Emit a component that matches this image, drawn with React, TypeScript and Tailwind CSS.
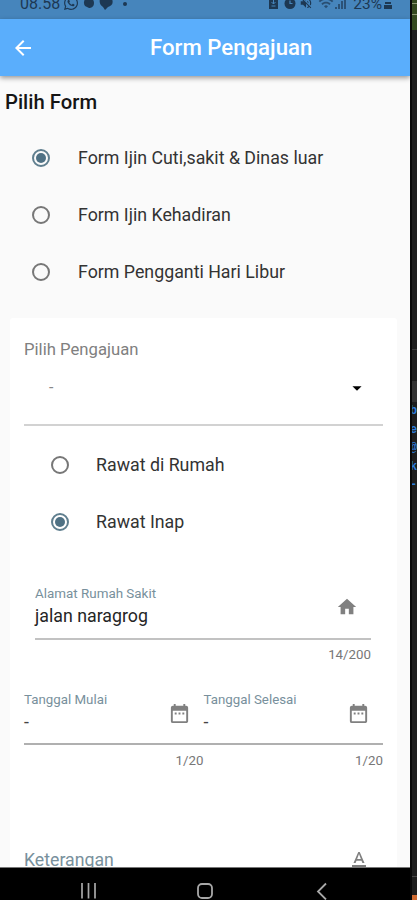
import React from 'react';
import { FaWhatsapp } from 'react-icons/fa';
import {
  MdArrowBack,
  MdArrowDropDown,
  MdDateRange,
  MdHome,
  MdTextFormat,
  MdVolumeOff,
  MdWifi,
} from 'react-icons/md';
import { clsx } from 'clsx';

interface RadioRowProps {
  label: string;
  checked?: boolean;
  inset?: boolean;
}

function RadioRow({ label, checked, inset }: RadioRowProps) {
  return (
    <div className={clsx('flex items-center h-[57px]', inset ? 'pl-[51px] gap-[27px]' : 'pl-8 gap-[28px]')}>
      <span className={clsx('w-[18px] h-[18px] shrink-0 rounded-full border-2 flex items-center justify-center', checked ? 'border-[#607f8f]' : 'border-[#777777]')}>
        {checked && <span className="w-[10px] h-[10px] rounded-full bg-[#4f7184]" />}
      </span>
      <span className="text-[17.8px] leading-5 text-[#333333] whitespace-nowrap">{label}</span>
    </div>
  );
}

function DateField({ label }: { label: string }) {
  return (
    <div className="flex-1">
      <div className="flex justify-between h-[53px] border-b-2 border-[#b0b0b0]">
        <div>
          <div className="text-[13.3px] leading-4 text-[#78909c] whitespace-nowrap">{label}</div>
          <div className="text-[17.7px] leading-5 pt-[4px] text-[#444444]">-</div>
        </div>
        <MdDateRange size={23} className="mt-[10px] mr-[13px] text-[#808080]" />
      </div>
      <div className="pt-[8px] text-right text-[13.3px] leading-4 text-[#777777]">1/20</div>
    </div>
  );
}

function StatusBar() {
  return (
    <div className="flex items-start h-[19px] overflow-hidden bg-[#4685bc] pl-[20px] pr-[18px] text-[#1d3853]">
      <span className="text-[16px] leading-4 -mt-[4px] w-[39px]">08.58</span>
      <FaWhatsapp size={16} className="-mt-[5px] ml-[4px]" />
      {/* chat and location notifications */}
      <svg width="32" height="14" viewBox="0 0 32 14" fill="currentColor" className="ml-[3px] -mt-[4px]">
        <path d="M6 1a6 6 0 0 1 6 6c0 4-3 5-5 5L3 10a6 6 0 0 1 3-9Z" />
        <path d="M18 3l4-3 8 3c2 5-1 7-4 8l-3 3-2-3c-3-2-4-5-3-8Z" />
      </svg>
      <span className="w-[4px] h-[4px] rounded-full bg-[#1d3853] mt-[2px] ml-[9px]" />
      <div className="flex ml-auto">
        <svg width="27" height="14" viewBox="0 0 27 14" className="-mt-[4px] mr-[3px]">
          <path d="M0 0h9v13H0Z" fill="currentColor" />
          <path d="M4.500 3v5M2.500 6l2 2 2-2M2.500 10h4" fill="none" stroke="#4685bc" />
          <circle cx="21" cy="7.500" r="5.500" fill="currentColor" />
          <path d="M21 4.500v3h2.500" fill="none" stroke="#4685bc" strokeWidth="1.200" />
        </svg>
        <MdVolumeOff size={14} className="-mt-[4px]" />
        <MdWifi size={16} className="-mt-[5px] ml-[5px] opacity-70" />
        <svg width="11" height="13" viewBox="0 0 11 13" className="-mt-[4px] ml-px" fill="currentColor" opacity="0.65">
          <path d="M0 11h2v2H0ZM3 8h2v5H3ZM6 5h2v8H6ZM9 1h2v12H9Z" />
        </svg>
        <span className="text-[15.500px] leading-4 -mt-[4px] ml-[7px] mr-[2px]">23%</span>
        <svg width="8" height="13" viewBox="0 0 8 13" className="-mt-[3px]" fill="currentColor">
          <path d="M0 0h8v3H0ZM1 5h6v2H1ZM0 8h8v4H0Z" />
        </svg>
      </div>
    </div>
  );
}

function NavBar() {
  return (
    <nav className="relative h-[33px] shrink-0 bg-black border-t border-[#777777] text-[#a8a8a8]">
      <svg width="410" height="32" viewBox="0 0 410 32" fill="none" stroke="currentColor">
        <path d="M82 15v15.500M88.500 15v15.500M95 15v15.500" strokeWidth="1.7" />
        <rect x="198" y="16" width="14" height="14" rx="4" strokeWidth="1.8" />
        <path d="M326 15.500l-8 8 8 8" strokeWidth="1.8" />
      </svg>
    </nav>
  );
}

function EditorStrip() {
  return (
    <aside className="flex flex-col w-[7px] h-full overflow-hidden bg-[#1e1e1e] border-l-2 border-[#090909]">
      <div className="h-[30px] shrink-0 bg-[#34491f] pt-[3px]">
        <div className="h-px bg-[#8c9873]" />
        <div className="h-px bg-[#8c9873] mt-[10px]" />
      </div>
      <div className="h-[320px] shrink-0 border-b border-[#3b3b3b]" />
      <div className="h-[31px] shrink-0" />
      <div className="h-[21px] shrink-0 bg-[#333333]" />
      <div className="font-['Liberation_Mono'] font-bold text-[12px] leading-[18.500px] text-[#2c7cdc] -ml-[2px] h-[100px] shrink-0">
        <div>b</div>
        <div>e</div>
        <div>@</div>
        <div>k</div>
        <div>-</div>
      </div>
      <div className="mt-auto h-[19px] shrink-0 border-t border-[#484848]" />
      <div className="h-[5px] shrink-0 bg-[#cf6a31]" />
    </aside>
  );
}

export default function App() {
  return (
    <div className="flex w-[417px] h-[900px] overflow-hidden bg-[#1e1e1e] font-['Roboto',sans-serif]">
      <div className="flex flex-col w-[410px] h-full shrink-0 bg-[#fafafa]">
        <StatusBar />
        <header className="flex items-center h-[57px] shrink-0 bg-[#5aaefc] text-white shadow-[0_2px_5px_rgba(0,0,0,0.4)]">
          <MdArrowBack size={24} className="ml-[11px]" />
          <h1 className="ml-[115px] text-[22.2px] font-medium whitespace-nowrap">Form Pengajuan</h1>
        </header>

        <main className="flex-1 min-h-0 overflow-hidden">
          <h2 className="pt-[14px] pl-[5px] text-[20.3px] leading-6 font-medium text-[#151515]">Pilih Form</h2>
          <div className="mt-[15px]">
            <RadioRow label="Form Ijin Cuti,sakit & Dinas luar" checked />
            <RadioRow label="Form Ijin Kehadiran" />
            <RadioRow label="Form Pengganti Hari Libur" />
          </div>

          <section className="mt-[18px] ml-[10px] mr-[13px] h-[600px] rounded-t-[3px] bg-white px-[14px] pt-[22px]">
            <div className="h-[86px] border-b-2 border-[#d2d2d2]">
              <div className="text-[16.7px] leading-5 text-[#808080]">Pilih Pengajuan</div>
              <div className="flex items-center justify-between pt-[17px] pl-[25px] pr-[15px]">
                <span className="text-[16px] leading-5 text-[#888888]">-</span>
                <MdArrowDropDown size={22} className="text-black" />
              </div>
            </div>

            <div className="-mx-[24px] pt-[10px]">
              <RadioRow label="Rawat di Rumah" inset />
              <RadioRow label="Rawat Inap" checked inset />
            </div>

            <div className="ml-[11px] mr-[12px] mt-[36px]">
              <div className="flex justify-between h-[54px] border-b-2 border-[#c2c2c2]">
                <div>
                  <div className="text-[13.4px] leading-4 text-[#78909c]">Alamat Rumah Sakit</div>
                  <div className="pt-[4px] text-[17.8px] leading-5 text-[#252525]">jalan naragrog</div>
                </div>
                <MdHome size={22} className="mt-[10px] mr-[13px] text-[#808080]" />
              </div>
              <div className="pt-[7px] text-right text-[13.3px] leading-4 text-[#777777]">14/200</div>
            </div>

            <div className="flex mt-[29px]">
              <DateField label="Tanggal Mulai" />
              <DateField label="Tanggal Selesai" />
            </div>

            <div className="flex justify-between mt-[80px] text-[#78909c]">
              <span className="pt-px text-[17.7px] leading-5">Keterangan</span>
              <MdTextFormat size={24} className="mr-[12px] -mt-px text-[#808080]" />
            </div>
          </section>
        </main>
        <NavBar />
      </div>
      <EditorStrip />
    </div>
  );
}
